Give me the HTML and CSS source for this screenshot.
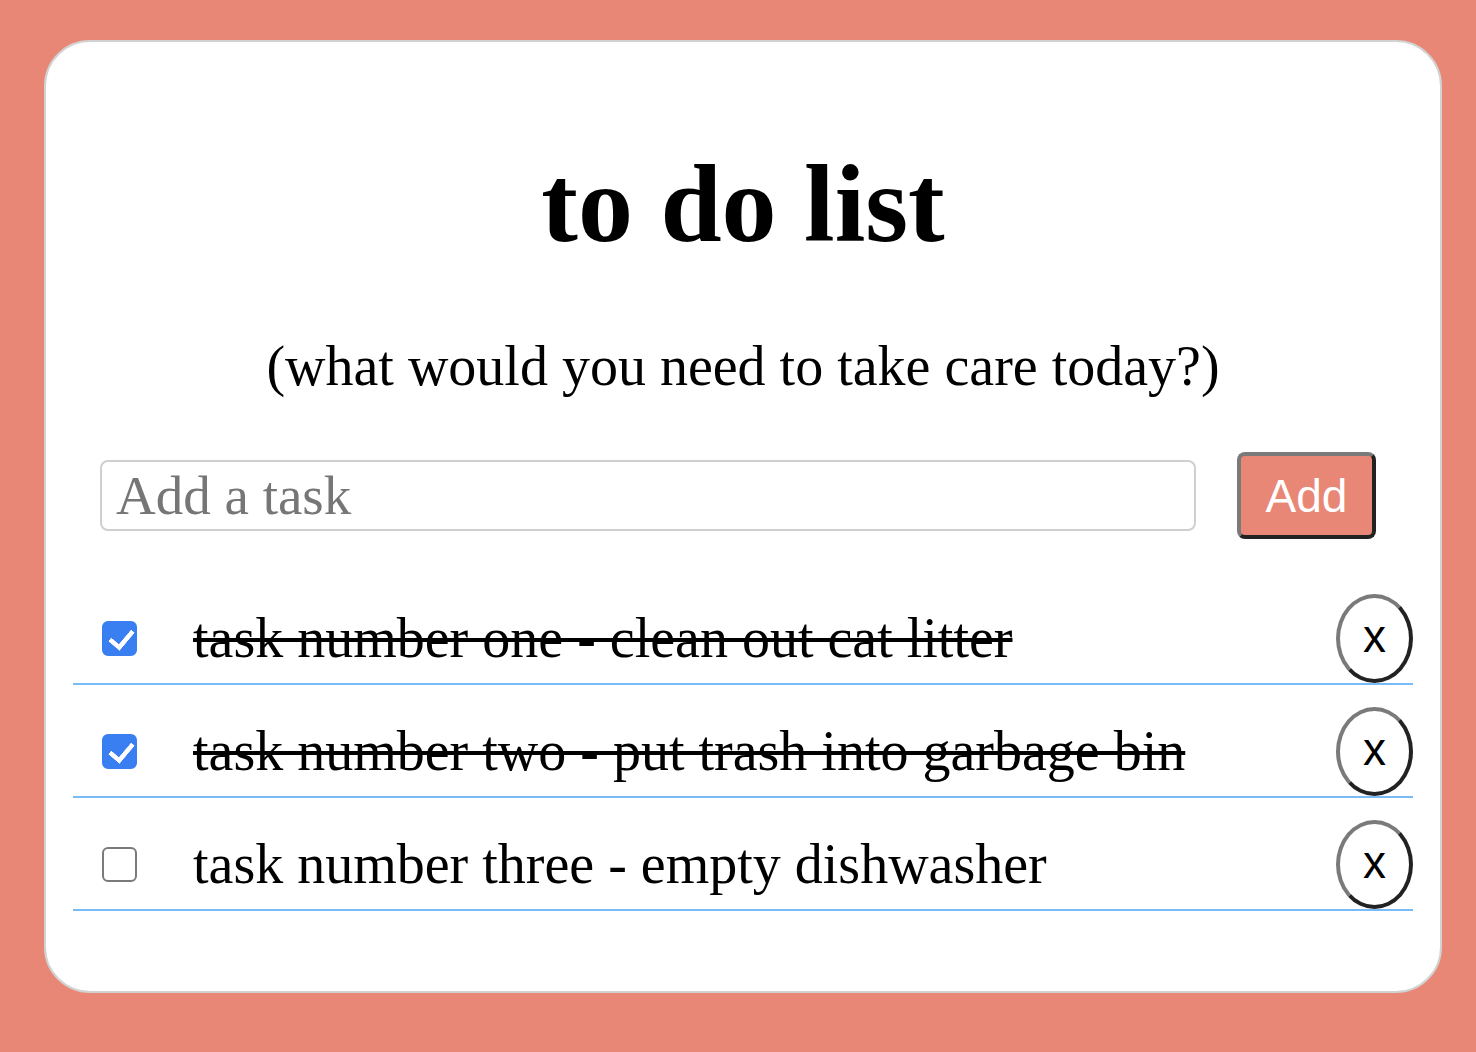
FILE: index.html
```html
<!DOCTYPE html>
<html lang="en">
<head>
<meta charset="utf-8">
<title>to do list</title>
<link rel="stylesheet" href="styles.css">
</head>
<body>
<main class="card">
  <h1 class="title">to do list</h1>
  <p class="subtitle">(what would you need to take care today?)</p>
  <form class="add-form">
    <input class="task-input" type="text" placeholder="Add a task">
    <button class="add-btn" type="button">Add</button>
  </form>
  <ul class="tasks">
    <li class="task">
      <input class="check" type="checkbox" checked>
      <span class="task-text done">task number one - clean out cat litter</span>
      <button class="del-btn" type="button">x</button>
    </li>
    <li class="task">
      <input class="check" type="checkbox" checked>
      <span class="task-text done">task number two - put trash into garbage bin</span>
      <button class="del-btn" type="button">x</button>
    </li>
    <li class="task">
      <input class="check" type="checkbox">
      <span class="task-text">task number three - empty dishwasher</span>
      <button class="del-btn" type="button">x</button>
    </li>
  </ul>
</main>
</body>
</html>
```

FILE: styles.css
```css
* { box-sizing: border-box; }
html, body { margin: 0; padding: 0; }
body {
  background: #e98777;
  padding: 40px 34px 0 44px;
  font-family: "Liberation Serif", "Times New Roman", serif;
  color: #000;
  min-height: 1052px;
}
.card {
  width: 1398px;
  height: 953px;
  background: #fff;
  border: 2px solid #d2d2d2;
  border-radius: 46px;
  display: flex;
  flex-direction: column;
}
.title {
  margin: 107px 0 0;
  font-size: 110px;
  line-height: 110px;
  font-weight: bold;
  text-align: center;
}
.subtitle {
  margin: 80px 0 0;
  font-size: 56px;
  line-height: 55px;
  text-align: center;
}
.add-form {
  margin: 58px 64px 0 54px;
  display: flex;
  align-items: center;
  gap: 41px;
}
.task-input {
  flex: 1;
  height: 71px;
  border: 2px solid #cfcfcf;
  border-radius: 8px;
  padding: 0 14px;
  font-family: "Liberation Serif", "Times New Roman", serif;
  font-size: 55px;
  color: #000;
  outline: none;
}
.task-input::placeholder { color: #767676; }
.add-btn {
  width: 139px;
  height: 87px;
  background: #e98777;
  color: #fff;
  font-family: "Liberation Sans", Arial, sans-serif;
  font-size: 46px;
  border: 4px solid;
  border-color: #7a7a7a #222 #222 #7a7a7a;
  border-radius: 8px;
  padding: 0;
}
.tasks {
  list-style: none;
  margin: 55px 27px 0;
  padding: 0;
  display: flex;
  flex-direction: column;
  gap: 22px;
}
.task {
  display: flex;
  align-items: center;
  border-bottom: 2px solid #79bbf6;
}
.check {
  appearance: none;
  -webkit-appearance: none;
  width: 35px;
  height: 35px;
  margin: 0 0 0 29px;
  border: 2px solid #7a7a7a;
  border-radius: 6px;
  background: #fff;
  position: relative;
  flex-shrink: 0;
}
.check:checked {
  background: #3a7ff2;
  border-color: #3a7ff2;
}
.check:checked::after {
  content: "";
  position: absolute;
  left: 10px;
  top: 2px;
  width: 10px;
  height: 19px;
  border-right: 5px solid #fff;
  border-bottom: 5px solid #fff;
  border-radius: 1px;
  transform: rotate(40deg);
}
.task-text {
  margin-left: 56px;
  flex: 1;
  font-size: 56px;
  line-height: 60px;
  padding-bottom: 2px;
}
.task-text.done {
  text-decoration: line-through;
  text-decoration-thickness: 4px;
}
.del-btn {
  width: 77px;
  height: 89px;
  border-radius: 50%;
  background: #fff;
  border: 4px solid;
  border-color: #7a7a7a #222 #222 #7a7a7a;
  font-family: "Liberation Sans", Arial, sans-serif;
  font-size: 46px;
  line-height: 1;
  color: #000;
  padding: 0 0 6px;
  flex-shrink: 0;
}
```
